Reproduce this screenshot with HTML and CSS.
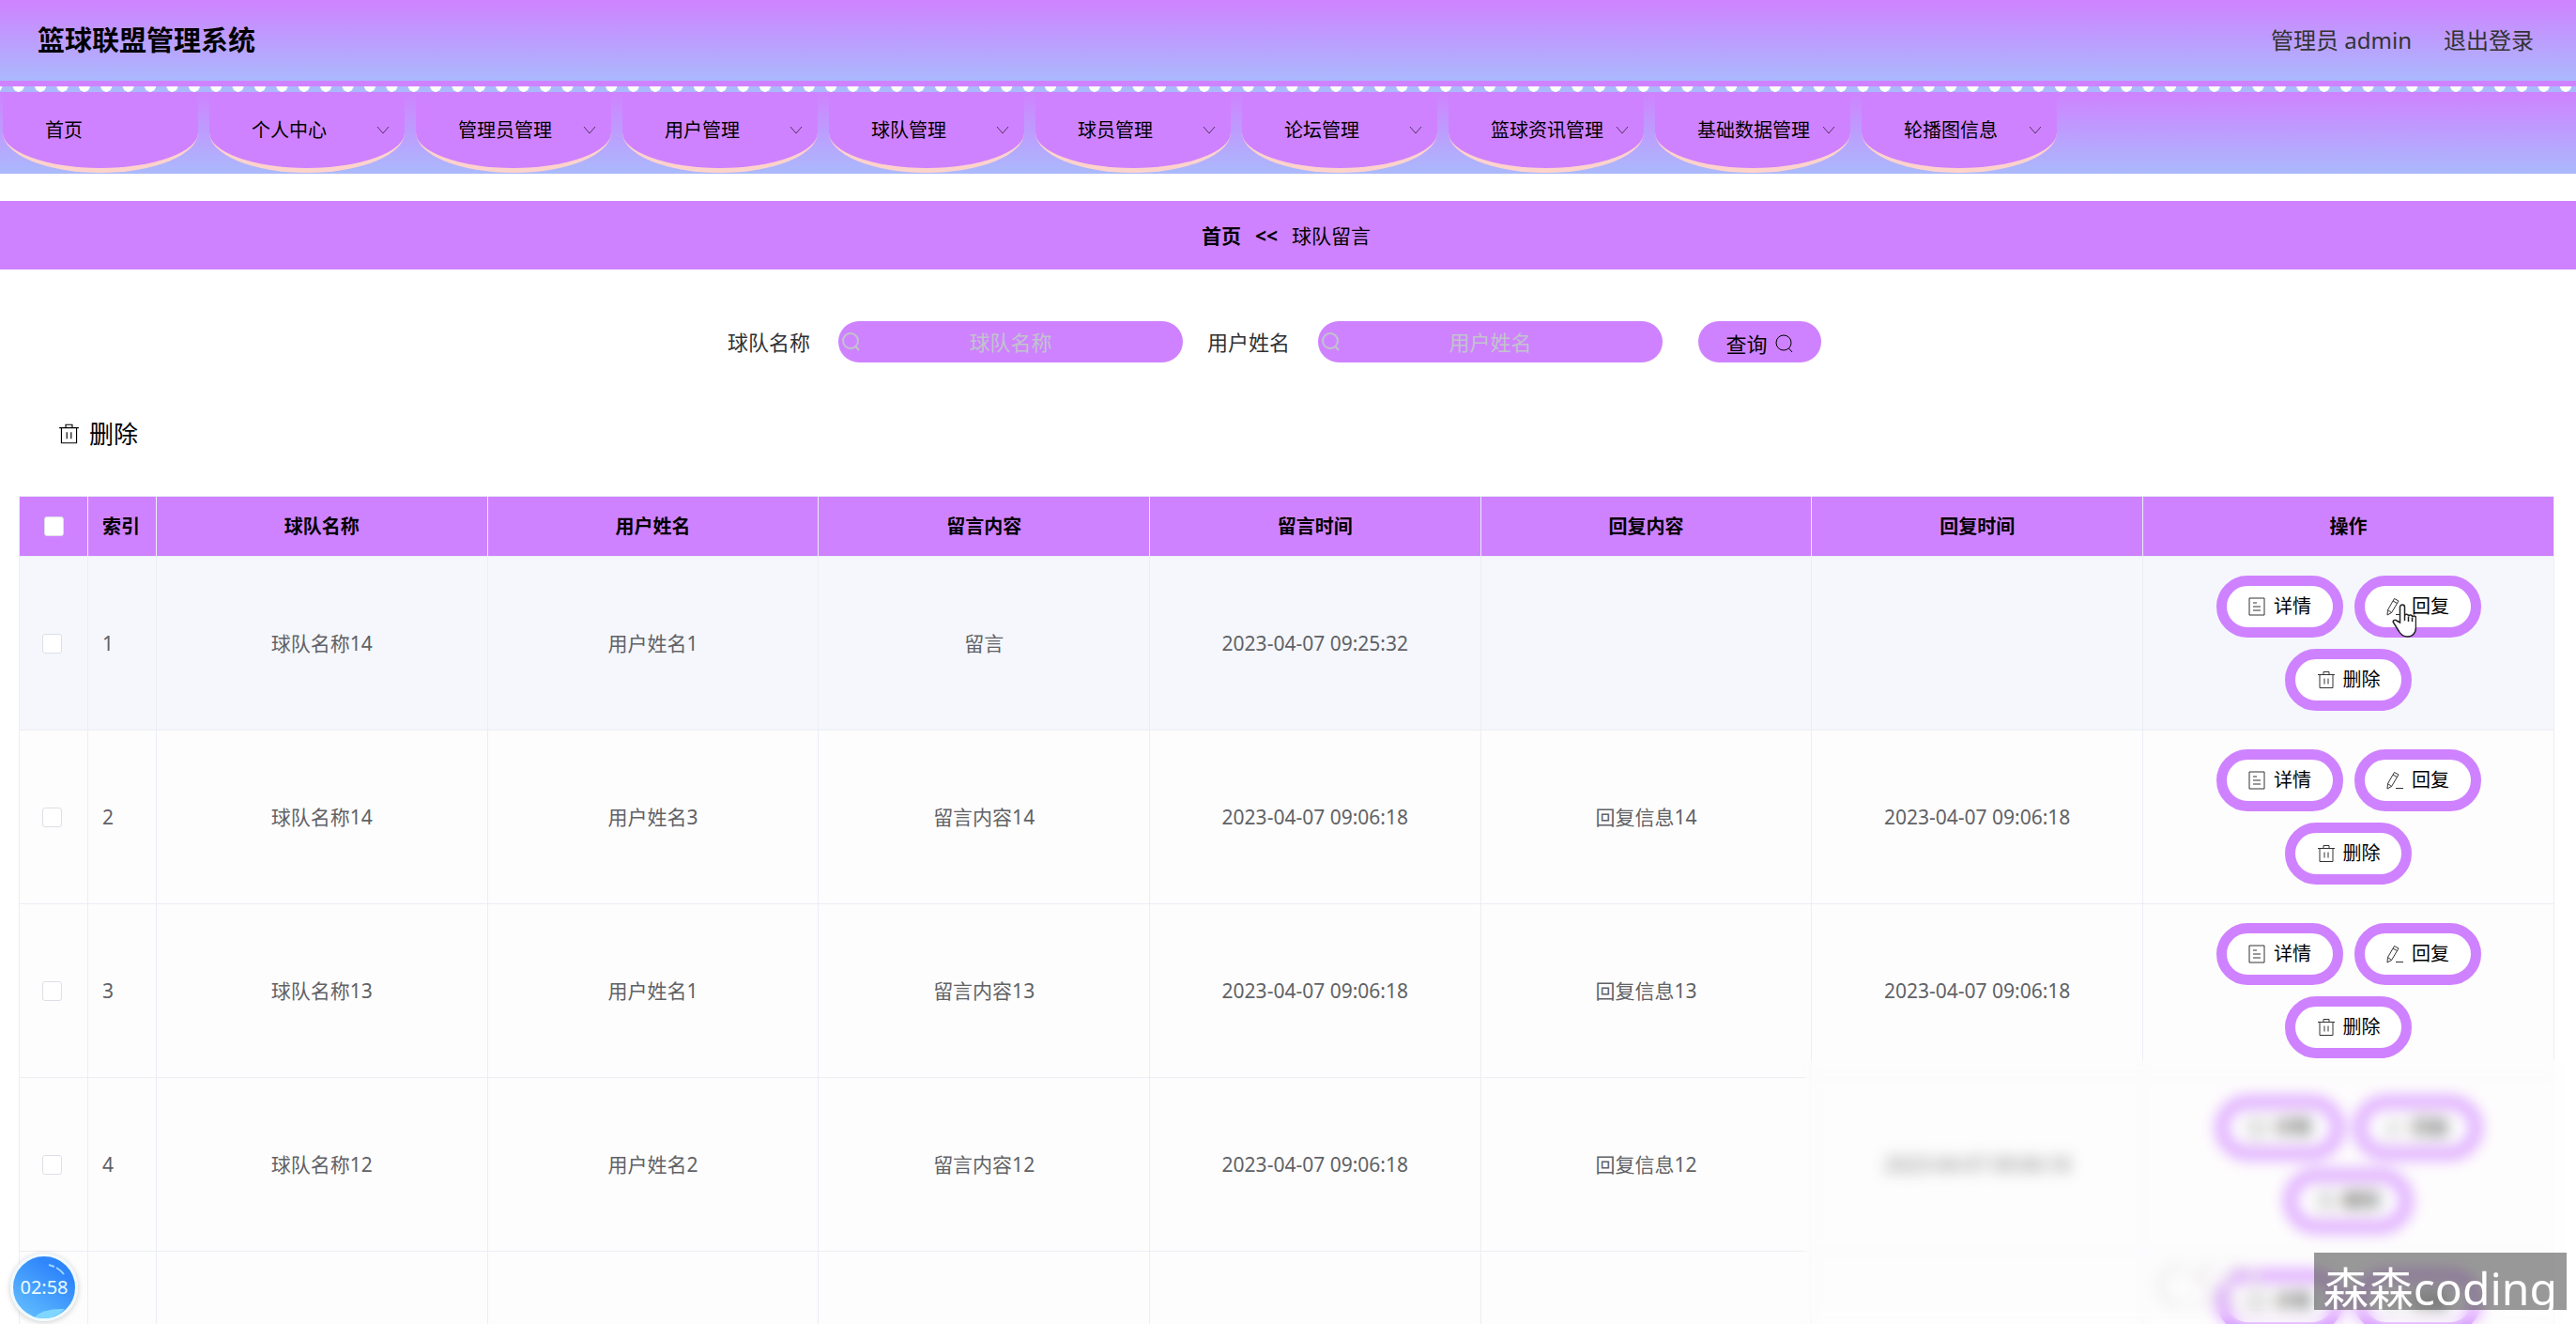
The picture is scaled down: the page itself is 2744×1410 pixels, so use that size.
FILE: index.html
```html
<!DOCTYPE html>
<html lang="zh-CN">
<head>
<meta charset="utf-8">
<title>篮球联盟管理系统</title>
<link rel="stylesheet" href="styles.css">
</head>
<body>
<svg class="sprite" aria-hidden="true">
  <symbol id="i-search" viewBox="0 0 20 20"><circle cx="9" cy="9" r="8"/><path d="M14.5 15l3.5 4"/></symbol>
  <symbol id="i-down" viewBox="0 0 14 10"><path d="M1 1l6 7 6-7"/></symbol>
  <symbol id="i-trash" viewBox="0 0 20 20"><path d="M1 4.500h18M3 4.500V18.500h14V4.500M7 4V1.500h6V4M8 8.500v6M12 8.500v6"/></symbol>
  <symbol id="i-doc" viewBox="0 0 20 20"><path d="M2 1h16v18H2zM6 6h4M6 10h8M6 14h8"/></symbol>
  <symbol id="i-edit" viewBox="0 0 20 20"><path d="M9.500 1.500l4.500 2.500-7.500 12.500-4.500 2.500.5-5.500zM8 4l4.500 2.500M2.500 13.500l4 3M11 18.500h8"/></symbol>
</svg>

<header class="top">
  <h1 class="brand">篮球联盟管理系统</h1>
  <div class="account"><span>管理员 admin</span><a href="#">退出登录</a></div>
</header>

<nav class="nav">
  <div class="lace"></div>
  <div class="tabs">
    <a class="tab" href="#">首页</a>
    <a class="tab" href="#">个人中心<svg class="caret"><use href="#i-down"/></svg></a>
    <a class="tab" href="#">管理员管理<svg class="caret"><use href="#i-down"/></svg></a>
    <a class="tab" href="#">用户管理<svg class="caret"><use href="#i-down"/></svg></a>
    <a class="tab" href="#">球队管理<svg class="caret"><use href="#i-down"/></svg></a>
    <a class="tab" href="#">球员管理<svg class="caret"><use href="#i-down"/></svg></a>
    <a class="tab" href="#">论坛管理<svg class="caret"><use href="#i-down"/></svg></a>
    <a class="tab" href="#">篮球资讯管理<svg class="caret"><use href="#i-down"/></svg></a>
    <a class="tab" href="#">基础数据管理<svg class="caret"><use href="#i-down"/></svg></a>
    <a class="tab" href="#">轮播图信息<svg class="caret"><use href="#i-down"/></svg></a>
  </div>
</nav>

<div class="crumbs"><a href="#">首页</a><b>&lt;&lt;</b><span>球队留言</span></div>

<main class="content">
  <form class="search">
    <label for="team">球队名称</label>
    <div class="field"><svg class="icon"><use href="#i-search"/></svg><input id="team" type="text" placeholder="球队名称"></div>
    <label for="user">用户姓名</label>
    <div class="field"><svg class="icon"><use href="#i-search"/></svg><input id="user" type="text" placeholder="用户姓名"></div>
    <button class="query" type="button">查询<svg class="icon"><use href="#i-search"/></svg></button>
  </form>

  <div class="toolbar">
    <button class="bulk" type="button"><svg class="icon"><use href="#i-trash"/></svg>删除</button>
  </div>

  <table class="grid">
    <colgroup><col class="c-narrow"><col class="c-narrow"><col><col><col><col><col><col><col class="c-ops"></colgroup>
    <thead>
      <tr><th><input type="checkbox" aria-label="全选"></th><th class="idx">索引</th><th>球队名称</th><th>用户姓名</th><th>留言内容</th><th>留言时间</th><th>回复内容</th><th>回复时间</th><th>操作</th></tr>
    </thead>
    <tbody>
      <tr class="hover">
        <td class="pick"><input type="checkbox" aria-label="选择 1"></td><td class="idx">1</td><td>球队名称14</td><td>用户姓名1</td><td>留言</td><td>2023-04-07 09:25:32</td><td></td><td></td>
        <td><div class="ops"><button class="op" type="button"><svg class="icon"><use href="#i-doc"/></svg>详情</button><button class="op" type="button"><svg class="icon"><use href="#i-edit"/></svg>回复<svg class="pointer" viewBox="0 0 26 36"><path d="M8.500 20V3.500a2.500 2.500 0 0 1 5 0V13a2 2 0 0 1 4 .5 2 2 0 0 1 4 1 2 2 0 0 1 4 1.500V25c0 6-3.500 10-9 10-5 0-7-2-9-5.500l-6-9.500c-1-2 1.500-3.500 3.500-2zM13.500 12v6M17.500 14v5M21.500 15v4"/></svg></button><button class="op" type="button"><svg class="icon"><use href="#i-trash"/></svg>删除</button></div></td>
      </tr>
      <tr>
        <td class="pick"><input type="checkbox" aria-label="选择 2"></td><td class="idx">2</td><td>球队名称14</td><td>用户姓名3</td><td>留言内容14</td><td>2023-04-07 09:06:18</td><td>回复信息14</td><td>2023-04-07 09:06:18</td>
        <td><div class="ops"><button class="op" type="button"><svg class="icon"><use href="#i-doc"/></svg>详情</button><button class="op" type="button"><svg class="icon"><use href="#i-edit"/></svg>回复</button><button class="op" type="button"><svg class="icon"><use href="#i-trash"/></svg>删除</button></div></td>
      </tr>
      <tr>
        <td class="pick"><input type="checkbox" aria-label="选择 3"></td><td class="idx">3</td><td>球队名称13</td><td>用户姓名1</td><td>留言内容13</td><td>2023-04-07 09:06:18</td><td>回复信息13</td><td>2023-04-07 09:06:18</td>
        <td><div class="ops"><button class="op" type="button"><svg class="icon"><use href="#i-doc"/></svg>详情</button><button class="op" type="button"><svg class="icon"><use href="#i-edit"/></svg>回复</button><button class="op" type="button"><svg class="icon"><use href="#i-trash"/></svg>删除</button></div></td>
      </tr>
      <tr>
        <td class="pick"><input type="checkbox" aria-label="选择 4"></td><td class="idx">4</td><td>球队名称12</td><td>用户姓名2</td><td>留言内容12</td><td>2023-04-07 09:06:18</td><td>回复信息12</td><td>2023-04-07 09:06:18</td>
        <td><div class="ops"><button class="op" type="button"><svg class="icon"><use href="#i-doc"/></svg>详情</button><button class="op" type="button"><svg class="icon"><use href="#i-edit"/></svg>回复</button><button class="op" type="button"><svg class="icon"><use href="#i-trash"/></svg>删除</button></div></td>
      </tr>
      <tr>
        <td></td><td></td><td></td><td></td><td></td><td></td><td></td><td></td>
        <td><div class="ops"><button class="op" type="button"><svg class="icon"><use href="#i-doc"/></svg>详情</button><button class="op" type="button"><svg class="icon"><use href="#i-edit"/></svg>回复</button><button class="op" type="button"><svg class="icon"><use href="#i-trash"/></svg>删除</button></div></td>
      </tr>
    </tbody>
  </table>
</main>

<div class="ghost">CSD</div>
<div class="frost"></div>
<div class="badge">森森coding</div>
<div class="timer"><svg class="shine" viewBox="0 0 66 66"><path class="wave" d="M22 65q10-10 33-9-9 10-22 10z"/><path class="glint" d="M38 9l6 2M46 12q5 3 8 7"/></svg><span>02:58</span></div>
</body>
</html>
```
FILE: styles.css
```css
:root {
  --purple: #cf82ff;
  --blue: #aab9fd;
  --line: #ebeef5;
}

* { box-sizing: border-box; }

body {
  margin: 0;
  height: 100vh;
  overflow: hidden;
  position: relative;
  background: #fff;
  color: #000;
  font: 20px/28px "Noto Sans", "Noto Sans CJK SC", sans-serif;
}

a { color: inherit; text-decoration: none; }
button, input { font: inherit; color: inherit; margin: 0; }
button { border: 0; cursor: pointer; }
svg { fill: none; stroke: currentColor; flex: none; }
.sprite { position: absolute; width: 0; height: 0; }
.icon { width: 20px; height: 20px; }

/* header */
.top {
  display: flex;
  justify-content: space-between;
  align-items: center;
  height: 86px;
  padding: 0 45px 0 40px;
  background: linear-gradient(var(--purple), var(--blue));
}
.brand { margin: 0; font-size: 29px; line-height: 40px; font-weight: 700; }
.account { display: flex; gap: 34px; font-size: 24px; line-height: 32px; color: #333; }

/* navigation */
.nav { background: linear-gradient(var(--purple) 12px, var(--blue)); }
.lace {
  height: 12px;
  border-top: 6px solid var(--purple);
  background: radial-gradient(ellipse 6px 6px at 50% 0, #fff 92%, transparent) 8px 0 / calc(1000% / 1173) 6px repeat-x var(--blue);
}
.tabs { display: flex; gap: 12px; padding: 0 3px 1px; }
.tab {
  display: flex;
  align-items: center;
  justify-content: space-between;
  width: 208px;
  height: 86px;
  padding: 0 16px 0 45px;
  background: var(--purple);
  border-bottom: 5px solid #ffd3cc;
  border-radius: 0 0 50% 50%;
  white-space: nowrap;
}
.caret { width: 14px; height: 10px; opacity: .6; }

.crumbs {
  display: flex;
  justify-content: center;
  align-items: center;
  gap: 15px;
  height: 73px;
  margin-top: 29px;
  padding-right: 4px;
  background: var(--purple);
  font-size: 21px;
}
.crumbs a, .crumbs b { font-weight: 700; }

/* search form */
.content { padding: 55px 23px 0 20px; }
.search {
  display: flex;
  justify-content: center;
  align-items: center;
  padding-right: 26px;
  font-size: 22px;
  line-height: 32px;
  color: #303133;
}
.field {
  display: flex;
  align-items: center;
  width: 367px;
  height: 44px;
  margin: 0 26px 0 30px;
  padding: 0 4px;
  border-radius: 22px;
  background: var(--purple);
  color: #c0c4cc;
}
.field .icon { stroke-width: 2; }
.field input {
  flex: 1;
  min-width: 0;
  padding: 0 20px 0 0;
  border: 0;
  background: none;
  text-align: center;
}
.field input::placeholder { color: #c0c4cc; opacity: 1; }
.query {
  display: flex;
  justify-content: center;
  align-items: center;
  gap: 8px;
  width: 131px;
  height: 44px;
  margin-left: 12px;
  padding: 4px 0 0;
  border-radius: 22px;
  background: var(--purple);
  color: #000;
}

.toolbar { padding: 56px 42px 46px; }
.bulk {
  display: flex;
  align-items: center;
  gap: 10px;
  padding: 0;
  background: none;
  font-size: 26px;
  line-height: 40px;
}
.bulk .icon { width: 23px; height: 26px; }

/* message table */
.grid {
  width: 100%;
  table-layout: fixed;
  border-collapse: collapse;
  background: #fefdfd;
  color: #606266;
  font-size: 21px;
  text-align: center;
}
.c-narrow { width: 73px; }
.c-ops { width: 438px; }
.grid th, .grid td { border: 1px solid var(--line); padding: 0; }
.grid th { height: 64px; background: var(--purple); color: #000; font-size: 20px; font-weight: 700; }
.grid td { height: 185px; }
.grid .idx { text-align: left; padding-left: 15px; }
.grid .pick { padding-right: 4px; }
.hover { background: #f5f7fc; }
.grid input {
  appearance: none;
  display: block;
  width: 21px;
  height: 21px;
  margin: 0 auto;
  border: 1px solid #dcdfe6;
  border-radius: 3px;
  background: #fff;
}
.ops {
  display: flex;
  flex-wrap: wrap;
  justify-content: center;
  gap: 12px;
  width: 300px;
  margin: 0 auto;
}
.op {
  display: flex;
  justify-content: center;
  align-items: center;
  gap: 8px;
  position: relative;
  width: 135px;
  height: 66px;
  padding: 0;
  border: 11px solid var(--purple);
  border-radius: 33px;
  background: #fff;
  color: #000;
  font-size: 20px;
}
.op .icon { color: #333; }
.pointer {
  position: absolute;
  left: 29px;
  top: 19px;
  width: 26px;
  height: 36px;
  fill: #fff;
  stroke: #222;
  stroke-width: 1.5;
}

/* overlays */
.ghost {
  position: absolute;
  right: 334px;
  bottom: 10px;
  color: #e4e2e4;
  font-size: 60px;
  line-height: 64px;
}
.frost {
  position: absolute;
  left: 70%;
  right: 10px;
  top: 80%;
  bottom: 0;
  background: rgba(255, 253, 253, .15);
  backdrop-filter: blur(8px);
}
.badge {
  position: absolute;
  right: 10px;
  bottom: 15px;
  height: 61px;
  padding: 0 10px;
  background: rgba(85, 85, 85, .6);
  color: #fff;
  font-size: 48px;
  line-height: 76px;
}
.timer {
  position: absolute;
  left: 11px;
  bottom: 3px;
  display: grid;
  place-items: center;
  width: 72px;
  height: 72px;
  border: 3px solid #effaff;
  border-radius: 50%;
  background: linear-gradient(35deg, #68c4ff, #2f86fb 75%);
  box-shadow: 0 1px 6px rgba(0, 0, 0, .2);
  color: #e8fbff;
}
.timer > * { grid-area: 1 / 1; }
.shine { width: 66px; height: 66px; }
.wave { fill: #7fd6ff; stroke: none; }
.glint { stroke: #9fd6ff; stroke-width: 2; }
```
